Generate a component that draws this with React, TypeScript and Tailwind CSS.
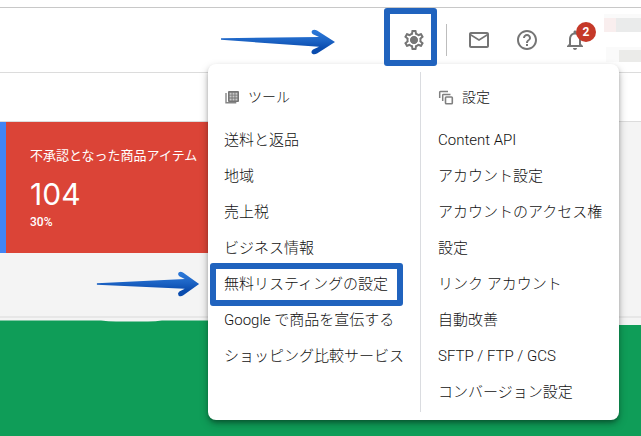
import React from "react";
import {
  MdHelpOutline,
  MdNotificationsNone,
  MdOutlineEmail,
  MdOutlineSettings,
} from "react-icons/md";

type MenuEntry = { label: string; highlighted?: boolean };

const toolEntries: MenuEntry[] = [
  { label: "送料と返品" },
  { label: "地域" },
  { label: "売上税" },
  { label: "ビジネス情報" },
  { label: "無料リスティングの設定", highlighted: true },
  { label: "Google で商品を宣伝する" },
  { label: "ショッピング比較サービス" },
];

const settingEntries: MenuEntry[] = [
  { label: "Content API" },
  { label: "アカウント設定" },
  { label: "アカウントのアクセス権" },
  { label: "設定" },
  { label: "リンク アカウント" },
  { label: "自動改善" },
  { label: "SFTP / FTP / GCS" },
  { label: "コンバージョン設定" },
];

function ArrowMark({ id, slope, className }: { id: string; slope: number; className: string }) {
  return (
    <svg
      aria-hidden="true"
      viewBox="0 0 116 28"
      preserveAspectRatio="none"
      className={"pointer-events-none absolute max-w-none " + className}
    >
      <defs>
        <linearGradient id={id} x1="0" y1="0" x2="0" y2="1">
          <stop offset="0.1" stopColor="#2a76d6" />
          <stop offset="0.45" stopColor="#1c63c4" />
          <stop offset="0.75" stopColor="#0a4cae" />
        </linearGradient>
      </defs>
      <path
        fill={`url(#${id})`}
        d={`M1 ${14 - slope - 0.8} L99 9 L93 6.2 Q90.5 4 92.5 2.2 Q94.5 1.2 97 2.6 L115 14 L97 25.6 Q94 27.2 92 25.4 Q90.5 23.4 93 21.6 L99 18.8 L1 ${14 - slope + 0.8} Z`}
      />
    </svg>
  );
}

function ToolsIcon() {
  return (
    <svg aria-hidden="true" viewBox="0 0 16 16" className="size-4">
      <path d="M2 4v9.7h10.3" fill="none" stroke="#858585" strokeWidth="1.4" />
      <rect x="4" y="2" width="11" height="11" rx="1" fill="#757575" />
      <g fill="#c8c8c8">
        <path d="M5.6 3.8h2v2h-2zM8.5 3.8h2v2h-2zM11.4 3.8h2v2h-2z" />
        <path d="M5.6 6.6h2v2h-2zM8.5 6.6h2v2h-2zM11.4 6.6h2v2h-2z" />
        <path d="M5.6 9.4h2v2h-2zM8.5 9.4h2v2h-2zM11.4 9.4h2v2h-2z" />
      </g>
    </svg>
  );
}

function LayersIcon() {
  return (
    <svg aria-hidden="true" viewBox="0 0 16 16" className="size-4" fill="none" stroke="#808080">
      <path d="M1.7 9V3.2Q1.7 2.5 2.4 2.5H10" strokeWidth="1.5" />
      <path d="M4.7 12V6.2Q4.7 5.5 5.4 5.5H12.5" strokeWidth="1.5" />
      <rect x="7.5" y="8" width="6.8" height="6.8" rx="0.8" strokeWidth="1.6" />
    </svg>
  );
}

function MenuColumn({
  title,
  icon,
  entries,
  className,
}: {
  title: string;
  icon: React.ReactNode;
  entries: MenuEntry[];
  className: string;
}) {
  return (
    <section className={className}>
      <h2 className="flex h-[50px] items-center gap-2 text-sm">
        {icon}
        {title}
      </h2>
      <ul>
        {entries.map((entry) => (
          <li key={entry.label} className="relative flex h-9 items-center">
            <a href="#" className="text-[15px] leading-6 whitespace-nowrap">
              {entry.label}
            </a>
            {entry.highlighted && (
              <>
                <span className="pointer-events-none absolute -inset-x-[14px] -top-[3px] -bottom-1 w-[193px] rounded-[3px] border-6 border-[#2063be]" />
                <ArrowMark id="arrow-entry" slope={0} className="top-1 right-full mr-6 h-7 w-[104px]" />
              </>
            )}
          </li>
        ))}
      </ul>
    </section>
  );
}

function SettingsMenu() {
  return (
    <nav
      aria-label="ツールと設定"
      className="absolute top-16 right-[22px] z-10 flex w-[411px] rounded-lg bg-white py-2 font-light text-[#111111] shadow-[0_3px_5px_-1px_rgba(0,0,0,0.35),0_4px_10px_rgba(0,0,0,0.22)]"
    >
      <MenuColumn title="ツール" icon={<ToolsIcon />} entries={toolEntries} className="w-[212px] px-4" />
      <MenuColumn
        title="設定"
        icon={<LayersIcon />}
        entries={settingEntries}
        className="flex-1 border-l border-[#dadce0] pr-4 pb-0.5 pl-[17px]"
      />
    </nav>
  );
}

function Header() {
  return (
    <header className="flex h-[65px] items-center justify-end border-b border-[#dcdcdc] text-[#757575]">
      <button type="button" aria-label="ツールと設定" className="relative z-20 mr-5 size-6">
        <svg viewBox="0 0 24 24" className="size-6">
          <MdOutlineSettings size={24} />
          <circle cx="12" cy="12" r="3.6" fill="currentColor" />
        </svg>
        <span className="pointer-events-none absolute -top-5 -right-[11px] h-[58px] w-[53px] rounded-[3px] border-6 border-[#2063be]" />
        <ArrowMark id="arrow-gear" slope={3} className="top-0 right-full mr-[66px] h-7 w-[116px]" />
      </button>
      <span className="mr-5 h-8 w-px bg-[#bdbdbd]" />
      <div className="flex gap-6">
        <button type="button" aria-label="メール">
          <MdOutlineEmail size={24} />
        </button>
        <button type="button" aria-label="ヘルプ">
          <MdHelpOutline size={24} />
        </button>
        <button type="button" aria-label="通知" className="relative">
          <MdNotificationsNone size={24} />
          <span className="absolute -top-1.5 -right-[9px] flex size-5 items-center justify-center rounded-full bg-[#c53929] text-xs font-bold text-white">
            2
          </span>
        </button>
      </div>
      <div className="ml-[17px] flex w-[37px] flex-col self-start pt-1.5">
        <div className="h-1 bg-[#fafafa]" />
        <div className="flex h-3.5">
          <span className="w-3 bg-[#f9eeee]" />
          <span className="flex-1 bg-[#eaebeb]" />
        </div>
        <div className="mt-[15px] ml-0.5 flex h-[15px]">
          <span className="w-[13px] bg-[#fafafa]" />
          <span className="flex-1 border-t-3 border-[#fafafa] bg-[#ebebe9]" />
        </div>
      </div>
    </header>
  );
}

export default function App() {
  return (
    <div className="relative flex min-h-screen flex-col overflow-hidden bg-[#f4f4f4] font-[Roboto,'Noto_Sans_CJK_JP',sans-serif]">
      <div className="bg-white">
        <div className="h-2 border-b border-[#c8c8c8]" />
        <Header />
        <div className="h-[49px] border-b border-[#dcdcdc]" />
      </div>
      <SettingsMenu />
      <main className="flex flex-1 flex-col">
        <section className="flex h-[131px] w-1/2 border-l-6 border-[#4285f4] bg-[#db4437] pt-6 pl-6 text-white">
          <div>
            <h1 className="text-[13px] leading-5 whitespace-nowrap">不承認となった商品アイテム</h1>
            <p className="mt-2 font-[Inter,sans-serif] text-[30px] leading-10">104</p>
            <p className="text-xs leading-4 font-medium">30%</p>
          </div>
        </section>
        <div className="mt-[63px] h-0.5 bg-[#e7e7e7]" />
        <svg
          aria-hidden="true"
          viewBox="0 0 641 118"
          preserveAspectRatio="none"
          className="w-full flex-1"
        >
          <path
            fill="#0f9d58"
            d="M0 2.5H101Q108 3.5 116 3.6H148Q156 3.5 162 2.5H500V7H641V118H0Z"
          />
        </svg>
      </main>
    </div>
  );
}
